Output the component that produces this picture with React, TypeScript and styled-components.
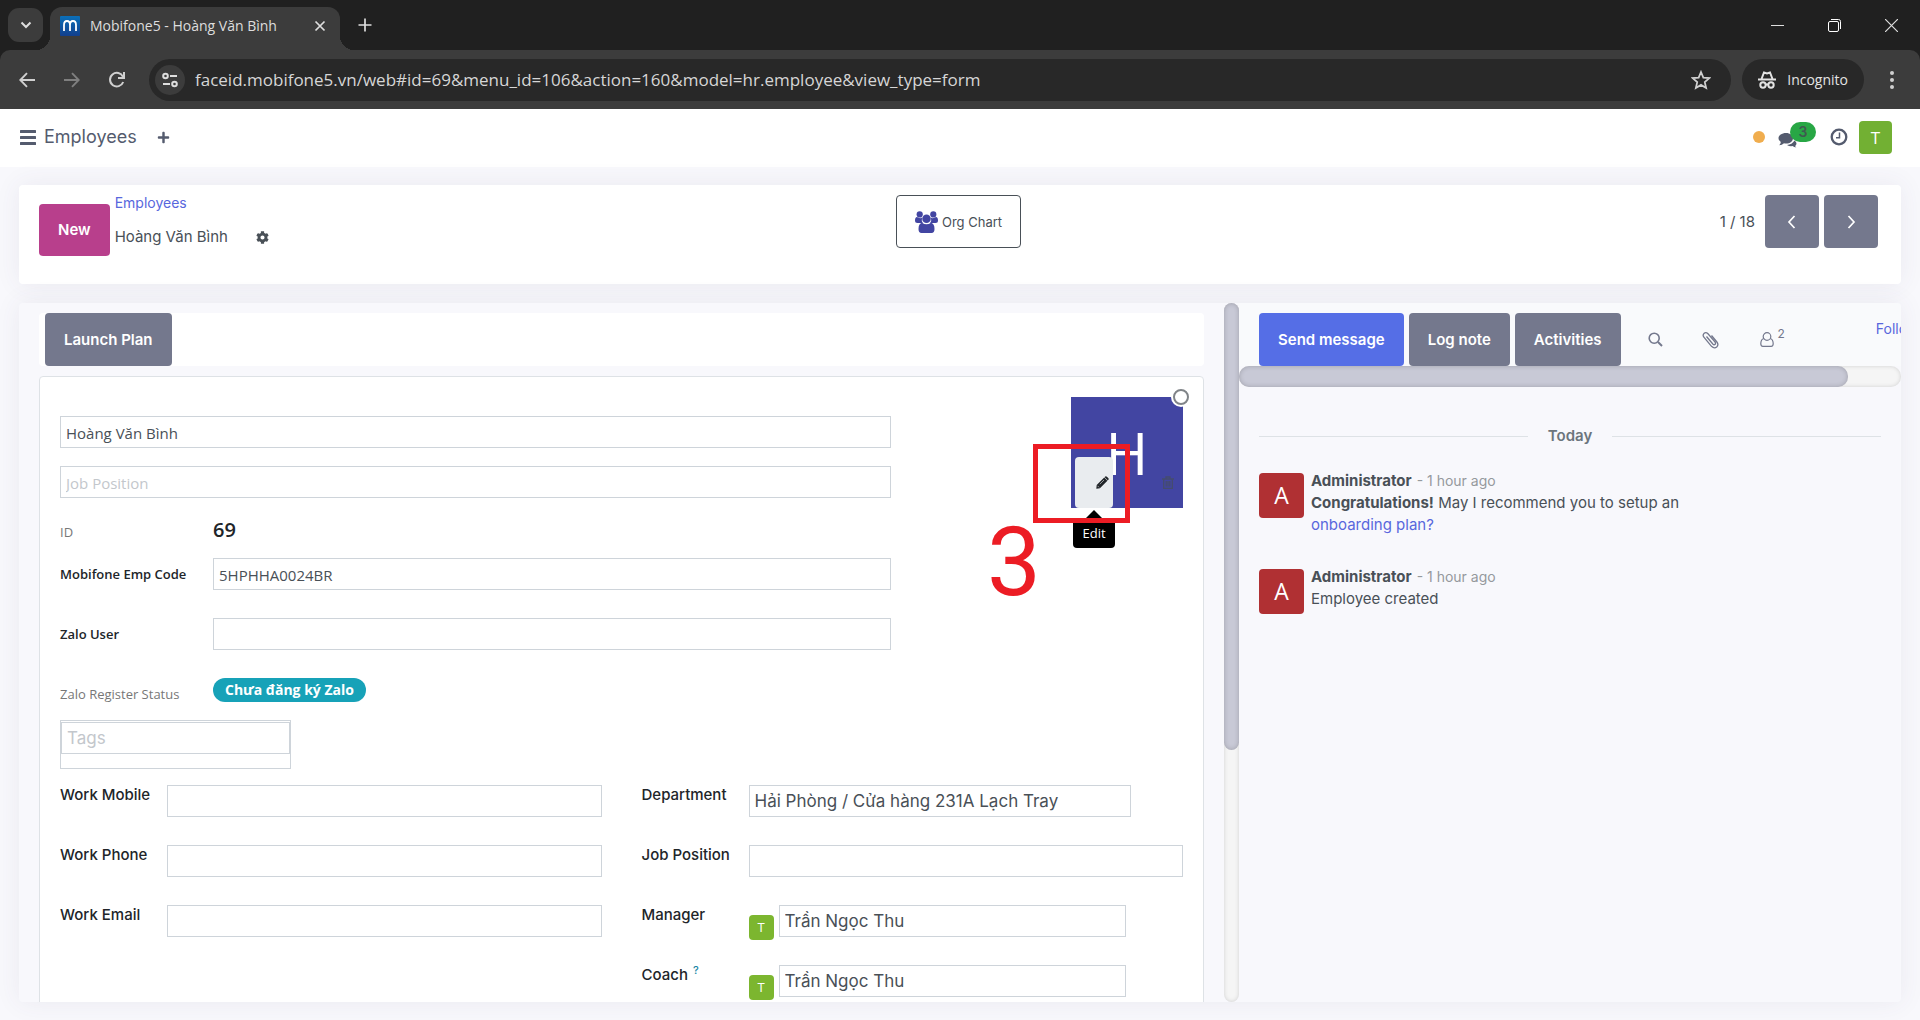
import React from "react";
import styled, { createGlobalStyle, css } from "styled-components";
import { FaPlus, FaCog } from "react-icons/fa";

const ui = `Inter, "Noto Sans", sans-serif`;
const sys = `"Open Sans", "Noto Sans", sans-serif`;

const GlobalStyle = createGlobalStyle`
  * { box-sizing: border-box; }
  body { margin: 0; background: #f8f8fc; color: #495057; font: 400 15px/20px ${ui}; }
  button, input { font: inherit; color: inherit; }
  button { border: 0; padding: 0; background: none; cursor: pointer; }
  a { color: #5867dd; text-decoration: none; }
`;

const Screen = styled.div`
  display: flex;
  flex-direction: column;
  height: 100vh;
  overflow: hidden;
`;

/* ---------- browser window ---------- */

const TabStrip = styled.div`
  display: flex;
  align-items: center;
  flex: none;
  height: 50px;
  padding-left: 8px;
  background: #202020;
  color: #dedede;
`;

const TabSearch = styled.button`
  display: grid;
  place-items: center;
  width: 35px;
  height: 34px;
  border-radius: 11px;
  background: #3c3c3c;
`;

const BrowserTab = styled.div`
  position: relative;
  display: flex;
  align-items: center;
  align-self: flex-end;
  width: 290px;
  height: 43px;
  margin-left: 7px;
  padding: 0 10px 6px;
  border-radius: 12px 12px 0 0;
  background: #3c3c3c;
  font: 400 14px/20px ${sys};

  &::before, &::after {
    content: "";
    position: absolute;
    bottom: 0;
    width: 14px;
    height: 14px;
  }
  &::before { left: -14px; background: radial-gradient(circle at 0 0, transparent 14px, #3c3c3c 14px); }
  &::after { right: -14px; background: radial-gradient(circle at 100% 0, transparent 14px, #3c3c3c 14px); }
`;

const TabTitle = styled.span`
  flex: 1;
  margin-left: 10px;
  white-space: nowrap;
`;

const StripButton = styled.button`
  display: grid;
  place-items: center;
  width: 20px;
  height: 20px;
`;

const NewTab = styled(StripButton)`margin-left: 15px;`;

const WindowButtons = styled.div`
  display: flex;
  margin-left: auto;
  & > button { width: 57px; height: 48px; }
`;

const BarBackdrop = styled.div`
  flex: none;
  background: #202020;
`;

const BrowserBar = styled.div`
  display: flex;
  align-items: center;
  height: 59px;
  padding: 0 18px 0 14px;
  border-radius: 10px 10px 0 0;
  background: #3c3c3c;
  color: #d0d0d0;
`;

const NavButton = styled(StripButton)<{ $dim?: boolean }>`
  width: 25px;
  height: 30px;
  margin-right: 20px;
  opacity: ${(p) => (p.$dim ? 0.45 : 1)};
`;

const Omnibox = styled.div`
  display: flex;
  align-items: center;
  flex: 1;
  height: 42px;
  padding: 0 20px 0 6px;
  border-radius: 21px;
  background: #282828;
`;

const SiteInfo = styled.button`
  display: grid;
  place-items: center;
  width: 30px;
  height: 30px;
  border-radius: 50%;
  background: #3c3c3c;
`;

const Address = styled.input`
  flex: 1;
  min-width: 0;
  margin-left: 10px;
  padding: 0;
  border: 0;
  outline: 0;
  background: none;
  color: #d6d6d6;
  font: 400 17px/24px ${sys};
`;

const IncognitoChip = styled.button`
  display: flex;
  align-items: center;
  gap: 11px;
  height: 41px;
  margin: 0 18px 0 11px;
  padding: 0 16px;
  border-radius: 21px;
  background: #282828;
  color: #e3e3e3;
  font: 400 14px/20px ${sys};
`;

/* ---------- application header ---------- */

const Header = styled.header`
  display: flex;
  align-items: center;
  flex: none;
  height: 58px;
  padding: 0 28px 2px 20px;
  background: #fff;
  color: #545b6e;
`;

const IconButton = styled.button`
  display: grid;
  place-items: center;
  height: 20px;
`;

const Brand = styled.a`
  margin: 0 20px 0 8px;
  color: #545b6e;
  font-size: 18px;
  line-height: 24px;
`;

const Systray = styled.div`
  display: flex;
  align-items: center;
  margin-left: auto;
`;

const PresenceDot = styled.span`
  width: 12px;
  height: 12px;
  margin-right: 13px;
  border-radius: 50%;
  background: #f0ad4e;
`;

const MessagesButton = styled.button`
  position: relative;
  width: 38px;
  height: 30px;
  margin-right: 13px;
  svg { display: block; }
`;

const CountBadge = styled.span`
  position: absolute;
  top: 0;
  right: 0;
  width: 26px;
  height: 20px;
  border-radius: 10px;
  background: #28a745;
  color: #3f5a50;
  font-size: 14px;
  font-weight: 600;
  line-height: 20px;
  text-align: center;
`;

const Avatar = styled.span<{ $size: number; $color: string }>`
  display: grid;
  place-items: center;
  flex: none;
  width: ${(p) => p.$size}px;
  height: ${(p) => p.$size}px;
  border-radius: 4px;
  background: ${(p) => p.$color};
  color: #fff;
  font: 400 ${(p) => (p.$size > 40 ? 23 : p.$size > 30 ? 17 : 13)}px/1 ${sys};
`;

const UserAvatar = styled(Avatar)`margin-left: 10px;`;

/* ---------- control panel ---------- */

const Page = styled.main`
  display: flex;
  flex-direction: column;
  flex: 1;
  gap: 19px;
  min-height: 0;
  padding: 18px 19px;
`;

const cardShadow = css`
  border-radius: 4px;
  box-shadow: 0 0 26px rgba(82, 63, 105, 0.08);
`;

const ControlPanel = styled.section`
  display: grid;
  grid-template-columns: 1fr auto 1fr;
  align-items: start;
  flex: none;
  min-height: 99px;
  padding: 10px 23px 0 20px;
  background: #fff;
  ${cardShadow}
`;

const Button = styled.button<{ $color?: string }>`
  flex: none;
  height: 53px;
  padding: 0 19px;
  border-radius: 4px;
  background: ${(p) => p.$color ?? "#74788d"};
  color: #fff;
  font-size: 15px;
  font-weight: 600;
  white-space: nowrap;
`;

const NewButton = styled(Button)`
  height: 52px;
  margin-top: 9px;
`;

const CrumbArea = styled.div`
  display: flex;
  gap: 5px;
`;

const Crumbs = styled.nav`
  display: grid;
  align-content: start;
  gap: 14px;
  margin-top: -2px;
  a { font-size: 14px; }
`;

const CurrentCrumb = styled.div`
  display: flex;
  align-items: center;
  gap: 28px;
`;

const OrgChartButton = styled.button`
  display: flex;
  align-items: center;
  gap: 4px;
  height: 53px;
  padding: 0 18px;
  border: 1px solid #495057;
  border-radius: 4px;
  font-size: 13px;
`;

const Pager = styled.div`
  display: flex;
  align-items: center;
  justify-content: flex-end;
  gap: 5px;
`;

const PagerCount = styled.span`margin-right: 5px;`;

const PagerButton = styled(Button)`
  display: grid;
  place-items: center;
  width: 54px;
  padding: 0;
`;

/* ---------- work area ---------- */

const WorkArea = styled.section`
  display: flex;
  flex: 1;
  min-height: 0;
  overflow: hidden;
  background: #f8f8fc;
  ${cardShadow}
`;

const FormPane = styled.div`
  flex: 1;
  min-width: 0;
  padding: 10px 20px 0;
`;

const StatusBar = styled.div`
  display: flex;
  margin-bottom: 10px;
  padding-left: 6px;
  border-radius: 4px;
  background: #fff;
`;

const Sheet = styled.form`
  min-height: 100%;
  padding: 20px;
  border: 1px solid #dee2e6;
  border-radius: 4px;
  background: #fff;
`;

const track = css`
  background: #f5f5f5;
  box-shadow: inset 0 0 4px rgba(0, 0, 0, 0.15);
  border-radius: 10px;
`;

const VerticalTrack = styled.div`
  flex: none;
  width: 15px;
  ${track}
`;

const HorizontalTrack = styled.div`
  height: 21px;
  ${track}
`;

const Thumb = styled.div<{ $w: string; $h: string }>`
  width: ${(p) => p.$w};
  height: ${(p) => p.$h};
  border-radius: 10px;
  background: #c8c9d6;
  box-shadow: inset 0 0 5px rgba(0, 0, 0, 0.2);
`;

const SheetTop = styled.div`
  display: flex;
  justify-content: space-between;
  margin-bottom: 16px;
`;

const TitleColumn = styled.div`
  display: grid;
  gap: 18px;
  flex: 0 0 74%;
  padding-top: 19px;
`;

const Field = styled.input<{ $sys?: boolean }>`
  display: block;
  width: 100%;
  min-width: 0;
  height: 32px;
  padding: ${(p) => (p.$sys ? "1px 5px 0" : "0 5px")};
  border: 1px solid #ced4da;
  outline: 0;
  background: #fff;
  color: #495057;
  font: ${(p) => (p.$sys ? `400 15px/24px ${sys}` : `400 17px/24px ${ui}`)};
  &::placeholder { color: #c3c7cc; opacity: 1; }
`;

const Details = styled.div`
  display: grid;
  row-gap: 28px;
`;

const DetailRow = styled.div<{ $tight?: boolean }>`
  display: grid;
  grid-template-columns: 153px minmax(0, 1fr);
  height: 32px;
  margin-bottom: ${(p) => (p.$tight ? "-18px" : "0")};
`;

const DetailLabel = styled.label<{ $muted?: boolean }>`
  color: ${(p) => (p.$muted ? "#777" : "#212529")};
  font: ${(p) => (p.$muted ? "400 13px" : "600 13px")}/32px ${sys};
  white-space: nowrap;
`;

const EmployeeId = styled.output`
  color: #212529;
  font: 600 20px/28px ${sys};
`;

const StatusPill = styled.span`
  justify-self: start;
  height: 24px;
  padding: 0 12px;
  border-radius: 12px;
  background: #17a2b8;
  color: #fff;
  font: 700 14px/24px ${sys};
`;

const TagsBox = styled.div`
  width: 231px;
  height: 49px;
  padding-top: 1px;
  border: 1px solid #ced4da;
`;

const Groups = styled.div`
  display: grid;
  grid-template-columns: minmax(0, 1fr) minmax(0, 1fr);
  column-gap: 40px;
`;

const Group = styled.div`
  display: grid;
  align-content: start;
  row-gap: 28px;
`;

const GroupRow = styled.div<{ $end?: number }>`
  display: grid;
  grid-template-columns: 107px minmax(0, 1fr);
  height: 32px;
  padding-right: ${(p) => p.$end ?? 0}px;
`;

const GroupLabel = styled.label`
  color: #212529;
  font-size: 15px;
  font-weight: 500;
  white-space: nowrap;
  sup { margin-left: 5px; color: #1b87a6; font-size: 11px; line-height: 10px; }
`;

const PersonField = styled.div`
  display: flex;
  gap: 5px;
`;

const PersonAvatar = styled(Avatar)`margin-top: 10px;`;

/* ---------- employee picture ---------- */

const Picture = styled.div`
  position: relative;
  display: grid;
  place-items: center;
  flex: none;
  width: 112px;
  height: 111px;
  background: #4245a2;
  color: #fff;
  font: 400 58px/1 ${sys};
`;

const Presence = styled.span`
  position: absolute;
  top: -10px;
  right: -8px;
  display: grid;
  place-items: center;
  width: 20px;
  height: 20px;
  border-radius: 50%;
  background: #fff;
  &::after { content: ""; width: 12px; height: 12px; border: 2px solid #808488; border-radius: 50%; }
`;

const PictureButton = styled.button<{ $active?: boolean }>`
  position: absolute;
  bottom: 0;
  ${(p) => (p.$active ? "left: 4px;" : "right: 0;")}
  display: grid;
  align-items: center;
  justify-content: end;
  width: 38px;
  height: 51px;
  padding-right: ${(p) => (p.$active ? 4 : 9)}px;
  border-radius: 4px;
  background: ${(p) => (p.$active ? "#e9ecef" : "transparent")};
  color: ${(p) => (p.$active ? "#212529" : "#454c6e")};
`;

const Tooltip = styled.span`
  position: absolute;
  top: 121px;
  left: 2px;
  width: 42px;
  height: 30px;
  border-radius: 4px;
  background: #000;
  color: #fff;
  font: 400 13px/30px ${sys};
  text-align: center;
  &::before {
    content: "";
    position: absolute;
    top: -8px;
    left: 13px;
    border: 8px solid transparent;
    border-top: 0;
    border-bottom-color: #000;
  }
`;

const StepFrame = styled.span`
  position: absolute;
  top: 47px;
  left: -38px;
  width: 97px;
  height: 79px;
  border: 5px solid #ec1c24;
  pointer-events: none;
`;

const StepNumber = styled.span`
  position: absolute;
  top: 117px;
  left: -84px;
  color: #ec1c24;
  font: 400 96px/1 "Noto Sans", sans-serif;
  font-family: Roboto, sans-serif;
`;

/* ---------- chatter ---------- */

const Chatter = styled.aside`
  display: flex;
  flex-direction: column;
  flex: 0 0 662px;
  min-width: 0;
`;

const ChatterBar = styled.div`
  display: flex;
  gap: 5px;
  padding: 10px 0 0 20px;
  overflow: hidden;
  background: #f9fafc;
  color: #74788d;
`;

const ChatterIcons = styled.div`
  display: flex;
  flex: none;
  gap: 5px;
  margin-left: 5px;
`;

const ChatterIcon = styled.button`
  display: grid;
  place-items: center;
  width: 50px;
  height: 53px;
`;

const FollowersButton = styled.button`
  display: flex;
  align-items: center;
  gap: 4px;
  padding-left: 19px;
  sup { margin-bottom: 12px; font-size: 12px; line-height: 12px; vertical-align: baseline; }
`;

const FollowLink = styled.button`
  flex: none;
  align-self: flex-start;
  margin: 6px 0 0 86px;
  color: #5867dd;
  font-size: 14px;
  line-height: 20px;
`;

const Thread = styled.div`padding: 39px 20px 0;`;

const DaySeparator = styled.div`
  display: flex;
  align-items: center;
  gap: 20px;
  margin-bottom: 25px;
  color: #6c757d;
  font-size: 15px;
  font-weight: 600;
  &::before, &::after { content: ""; flex: 1; height: 1px; background: #dee2e6; }
`;

const Message = styled.article`
  display: flex;
  gap: 7px;
  margin-bottom: 31px;
`;

const MessageAvatar = styled(Avatar)`margin-top: 2px;`;

const Author = styled.div`
  margin-bottom: 1px;
  strong { margin-right: 5px; font-weight: 700; }
  time { color: #95999d; font-size: 14px; }
`;

const Body = styled.div`line-height: 22px;`;

/* ---------- drawings ---------- */

const Line = ({ d, size = 16, w = 2, box = 16 }: { d: string; size?: number; w?: number; box?: number }) => (
  <svg width={size} height={size} viewBox={`0 0 ${box} ${box}`} fill="none" stroke="currentColor" strokeWidth={w}>
    <path d={d} />
  </svg>
);

const Logo = () => (
  <svg width="20" height="20" viewBox="0 0 20 20">
    <defs>
      <linearGradient id="logo" x2="0" y2="1"><stop stopColor="#0a6fb8" /><stop offset="1" stopColor="#123f8d" /></linearGradient>
    </defs>
    <rect width="20" height="20" rx="1" fill="url(#logo)" />
    <path d="M4 15V9q0-4 3-4t3 4v6M10 9q0-4 3-4t3 4v6" fill="none" stroke="#fff" strokeWidth="1.8" />
  </svg>
);

const Tune = () => (
  <svg width="18" height="18" viewBox="0 0 18 18" fill="none" stroke="#dedede" strokeWidth="2">
    <circle cx="4.5" cy="5" r="2.3" /><path d="M9 5h7M2 13h7" /><circle cx="13.5" cy="13" r="2.3" />
  </svg>
);

const Incognito = () => (
  <svg width="18" height="20" viewBox="0 0 18 20" fill="none" stroke="currentColor" strokeWidth="2">
    <path d="M0 9.5h18M3.5 9 6 2.5l3 1 3-1L14.5 9" />
    <circle cx="5" cy="15" r="2.7" /><circle cx="13" cy="15" r="2.7" /><path d="M7.5 14.5h3" />
  </svg>
);

const Reload = () => (
  <svg width="18" height="18" viewBox="0 0 18 18" fill="none" stroke="currentColor" strokeWidth="2">
    <path d="M15.2 11A6.8 6.8 0 1 1 15 5.8" /><path d="M16 1v6h-6" />
  </svg>
);

const Restore = () => (
  <svg width="13" height="13" viewBox="0 0 13 13" fill="none" stroke="#fff">
    <rect x=".5" y="2.5" width="10" height="10" rx="1.5" /><path d="M3 .5h7.5a2 2 0 0 1 2 2V10" />
  </svg>
);

const Menu = () => (
  <svg width="16" height="15" viewBox="0 0 16 15" fill="currentColor">
    <rect width="16" height="3" rx=".5" /><rect y="6" width="16" height="3" rx=".5" /><rect y="12" width="16" height="3" rx=".5" />
  </svg>
);

const Comments = () => (
  <svg width="19" height="22" viewBox="0 0 19 22" fill="currentColor">
    <path d="M8 7c4.200 0 7 2.300 7 5.200s-2.800 5.300-7 5.300q-1 0-2-.2Q4 19.200 1.200 19.300q1.500-1.200 1.600-3.200Q.5 14.600.5 12.200C.5 9.300 3.800 7 8 7Z" />
    <path d="M9 19q5-.3 7.500-4.500 2 1.300 2 3 0 1.500-1.300 2.400.2 1 1.300 1.600-2.500-.1-4-1.400-3 .5-5.500-1.100Z" />
  </svg>
);

const Clock = () => (
  <svg width="18" height="18" viewBox="0 0 18 18" fill="none" stroke="currentColor">
    <circle cx="9" cy="9" r="7.3" strokeWidth="2.3" /><path d="M9.500 4.500v5.200H6" strokeWidth="1.5" />
  </svg>
);

const People = () => (
  <svg width="23" height="22" viewBox="0 0 23 22" fill="#4245a2">
    <circle cx="4.7" cy="3.4" r="3.1" /><circle cx="18.3" cy="3.4" r="3.1" />
    <path d="M0 9.500Q0 6 2 6q2.500 1.800 5 .8-.8 3 .9 5.200H2.500Q0 12 0 9.500ZM23 9.500Q23 6 21 6q-2.500 1.800-5 .8.800 3-.9 5.200h5.400Q23 12 23 9.500Z" />
    <circle cx="11.5" cy="7.8" r="4.3" />
    <path d="M7 11.700q4.500 3.200 9 0 3.500.8 3.500 6.300 0 4-3 4h-10q-3 0-3-4 0-5.500 3.500-6.300Z" />
  </svg>
);

const Pencil = () => (
  <svg width="13" height="13" viewBox="0 0 13 13" fill="currentColor">
    <path d="m8.200 1.600 3.200 3.200-7.500 7.500L.3 12.800.7 9.100Zm.7-.8q1-1 2 0l1.300 1.300q1 1 0 2l-.3.300-3.200-3.200Z" />
    <path d="m1.500 9.800 1.600 1.600M3.800 8.200 8 4" stroke="#e9ecef" strokeWidth=".6" />
  </svg>
);

const Trash = () => (
  <svg width="12" height="13" viewBox="0 0 12 13" fill="none" stroke="currentColor" strokeWidth="1.3">
    <path d="M0 3h12M4 3V1h4v2M1.700 3v9.300h8.600V3M4.200 5v5.500M6 5v5.500M7.800 5v5.500" />
  </svg>
);

const Search = () => (
  <svg width="15" height="15" viewBox="0 0 15 15" fill="none" stroke="currentColor" strokeWidth="1.6">
    <circle cx="6.2" cy="6.2" r="5" /><path d="m10 10 4 4" strokeWidth="2" />
  </svg>
);

const Paperclip = () => (
  <svg width="17" height="18" viewBox="0 0 17 18" fill="none" stroke="currentColor" strokeWidth="1.3">
    <path d="M4.500 5.500 10.800 13q1.200 1.200 2.200.4t.1-2.200L6 2.800Q4 .7 2.200 2.200T1.700 6l7.800 9.300q2.700 2.600 5.200.7 2.300-2.200.2-5L9.500 4.500" />
  </svg>
);

const Person = () => (
  <svg width="14" height="15" viewBox="0 0 14 15" fill="none" stroke="currentColor" strokeWidth="1.2">
    <circle cx="7" cy="4.5" r="3.8" />
    <path d="M3.800 6.500Q.8 7.300.8 11.800q0 2.500 2 2.500h8.400q2 0 2-2.500 0-4.500-3-5.300" />
  </svg>
);

/* ---------- page ---------- */

const contactFields = ["Work Mobile", "Work Phone", "Work Email"];

const slug = (s: string) => s.toLowerCase().replace(/ /g, "-");

const PersonRow = ({ label, hint }: { label: string; hint?: boolean }) => (
  <GroupRow $end={57}>
    <GroupLabel htmlFor={slug(label)}>{label}{hint && <sup>?</sup>}</GroupLabel>
    <PersonField>
      <PersonAvatar $size={25} $color="#7cb62f">T</PersonAvatar>
      <Field id={slug(label)} defaultValue="Trần Ngọc Thu" />
    </PersonField>
  </GroupRow>
);

const ChatterMessage = ({ children }: { children: React.ReactNode }) => (
  <Message>
    <MessageAvatar $size={45} $color="#b03033">A</MessageAvatar>
    <div>
      <Author><strong>Administrator</strong><time>- 1 hour ago</time></Author>
      <Body>{children}</Body>
    </div>
  </Message>
);

export default function App() {
  return (
    <Screen>
      <GlobalStyle />
      <TabStrip>
        <TabSearch aria-label="Search tabs"><Line d="m3.500 5.500 4.500 4.500 4.500-4.500" /></TabSearch>
        <BrowserTab>
          <Logo />
          <TabTitle>Mobifone5 - Hoàng Văn Bình</TabTitle>
          <StripButton aria-label="Close tab"><Line d="m3.500 3.500 9 9m0-9-9 9" w={1.7} /></StripButton>
        </BrowserTab>
        <NewTab aria-label="New tab"><Line d="M8 1.500v13M1.500 8h13" w={1.7} /></NewTab>
        <WindowButtons>
          <StripButton aria-label="Minimize"><Line d="M0 6.500h13" size={13} box={13} w={1} /></StripButton>
          <StripButton aria-label="Restore"><Restore /></StripButton>
          <StripButton aria-label="Close"><Line d="m0 0 13 13m0-13L0 13" size={13} box={13} w={1.2} /></StripButton>
        </WindowButtons>
      </TabStrip>
      <BarBackdrop>
        <BrowserBar>
          <NavButton aria-label="Back"><Line d="M16 8H1.500M8 1.200 1.300 8 8 14.800" w={1.9} /></NavButton>
          <NavButton aria-label="Forward" $dim><Line d="M0 8h14.500M8 1.200 14.700 8 8 14.800" w={1.9} /></NavButton>
          <NavButton aria-label="Reload"><Reload /></NavButton>
          <Omnibox>
            <SiteInfo aria-label="Site information"><Tune /></SiteInfo>
            <Address
              aria-label="Address"
              defaultValue="faceid.mobifone5.vn/web#id=69&menu_id=106&action=160&model=hr.employee&view_type=form"
            />
            <StripButton aria-label="Bookmark">
              <Line d="m9 1.800 2.100 5 5.400.5-4.100 3.600 1.200 5.300L9 13.400l-4.600 2.800 1.200-5.300-4.100-3.600 5.400-.5Z" size={20} box={18} w={1.6} />
            </StripButton>
          </Omnibox>
          <IncognitoChip><Incognito />Incognito</IncognitoChip>
          <StripButton aria-label="Browser menu">
            <svg width="4" height="18" viewBox="0 0 4 18" fill="currentColor">
              <circle cx="2" cy="2" r="2" /><circle cx="2" cy="9" r="2" /><circle cx="2" cy="16" r="2" />
            </svg>
          </StripButton>
        </BrowserBar>
      </BarBackdrop>

      <Header>
        <IconButton aria-label="Apps"><Menu /></IconButton>
        <Brand href="#employees">Employees</Brand>
        <IconButton aria-label="Add"><FaPlus size={13} /></IconButton>
        <Systray>
          <PresenceDot />
          <MessagesButton aria-label="Messages"><Comments /><CountBadge>3</CountBadge></MessagesButton>
          <StripButton aria-label="Activities"><Clock /></StripButton>
          <UserAvatar $size={33} $color="#72b033">T</UserAvatar>
        </Systray>
      </Header>

      <Page>
        <ControlPanel>
          <CrumbArea>
            <NewButton $color="#b83f8c">New</NewButton>
            <Crumbs>
              <a href="#employees">Employees</a>
              <CurrentCrumb>
                Hoàng Văn Bình
                <IconButton aria-label="Actions"><FaCog size={13} /></IconButton>
              </CurrentCrumb>
            </Crumbs>
          </CrumbArea>
          <OrgChartButton><People />Org Chart</OrgChartButton>
          <Pager>
            <PagerCount>1 / 18</PagerCount>
            <PagerButton aria-label="Previous"><Line d="m10.500 2-5.500 6 5.500 6" w={1.7} /></PagerButton>
            <PagerButton aria-label="Next"><Line d="m5.500 2 5.500 6-5.500 6" w={1.7} /></PagerButton>
          </Pager>
        </ControlPanel>

        <WorkArea>
          <FormPane>
            <StatusBar><Button>Launch Plan</Button></StatusBar>
            <Sheet>
              <SheetTop>
                <TitleColumn>
                  <Field $sys aria-label="Name" defaultValue="Hoàng Văn Bình" />
                  <Field $sys aria-label="Job title" placeholder="Job Position" />
                  <Details>
                    <DetailRow $tight>
                      <DetailLabel $muted htmlFor="emp-id">ID</DetailLabel>
                      <EmployeeId id="emp-id">69</EmployeeId>
                    </DetailRow>
                    <DetailRow>
                      <DetailLabel htmlFor="emp-code">Mobifone Emp Code</DetailLabel>
                      <Field $sys id="emp-code" defaultValue="5HPHHA0024BR" />
                    </DetailRow>
                    <DetailRow>
                      <DetailLabel htmlFor="zalo-user">Zalo User</DetailLabel>
                      <Field $sys id="zalo-user" />
                    </DetailRow>
                    <DetailRow $tight>
                      <DetailLabel as="span" $muted>Zalo Register Status</DetailLabel>
                      <StatusPill>Chưa đăng ký Zalo</StatusPill>
                    </DetailRow>
                    <TagsBox><Field aria-label="Tags" placeholder="Tags" /></TagsBox>
                  </Details>
                </TitleColumn>
                <Picture>
                  H
                  <Presence />
                  <PictureButton type="button" $active aria-label="Edit"><Pencil /></PictureButton>
                  <PictureButton type="button" aria-label="Delete"><Trash /></PictureButton>
                  <Tooltip>Edit</Tooltip>
                  <StepFrame />
                  <StepNumber>3</StepNumber>
                </Picture>
              </SheetTop>
              <Groups>
                <Group>
                  {contactFields.map((label) => (
                    <GroupRow key={label}>
                      <GroupLabel htmlFor={slug(label)}>{label}</GroupLabel>
                      <Field id={slug(label)} />
                    </GroupRow>
                  ))}
                </Group>
                <Group>
                  <GroupRow $end={52}>
                    <GroupLabel htmlFor="department">Department</GroupLabel>
                    <Field id="department" defaultValue="Hải Phòng / Cửa hàng 231A Lạch Tray" />
                  </GroupRow>
                  <GroupRow>
                    <GroupLabel htmlFor="job-position">Job Position</GroupLabel>
                    <Field id="job-position" />
                  </GroupRow>
                  <PersonRow label="Manager" />
                  <PersonRow label="Coach" hint />
                </Group>
              </Groups>
            </Sheet>
          </FormPane>
          <VerticalTrack><Thumb $w="100%" $h="64%" /></VerticalTrack>
          <Chatter>
            <ChatterBar>
              <Button $color="#556ee6">Send message</Button>
              <Button>Log note</Button>
              <Button>Activities</Button>
              <ChatterIcons>
                <ChatterIcon aria-label="Search messages"><Search /></ChatterIcon>
                <ChatterIcon aria-label="Attachments"><Paperclip /></ChatterIcon>
                <FollowersButton aria-label="Followers"><Person /><sup>2</sup></FollowersButton>
              </ChatterIcons>
              <FollowLink>Following</FollowLink>
            </ChatterBar>
            <HorizontalTrack><Thumb $w="92%" $h="100%" /></HorizontalTrack>
            <Thread>
              <DaySeparator>Today</DaySeparator>
              <ChatterMessage>
                <b>Congratulations!</b> May I recommend you to setup an<br />
                <a href="#plan">onboarding plan?</a>
              </ChatterMessage>
              <ChatterMessage>Employee created</ChatterMessage>
            </Thread>
          </Chatter>
        </WorkArea>
      </Page>
    </Screen>
  );
}
